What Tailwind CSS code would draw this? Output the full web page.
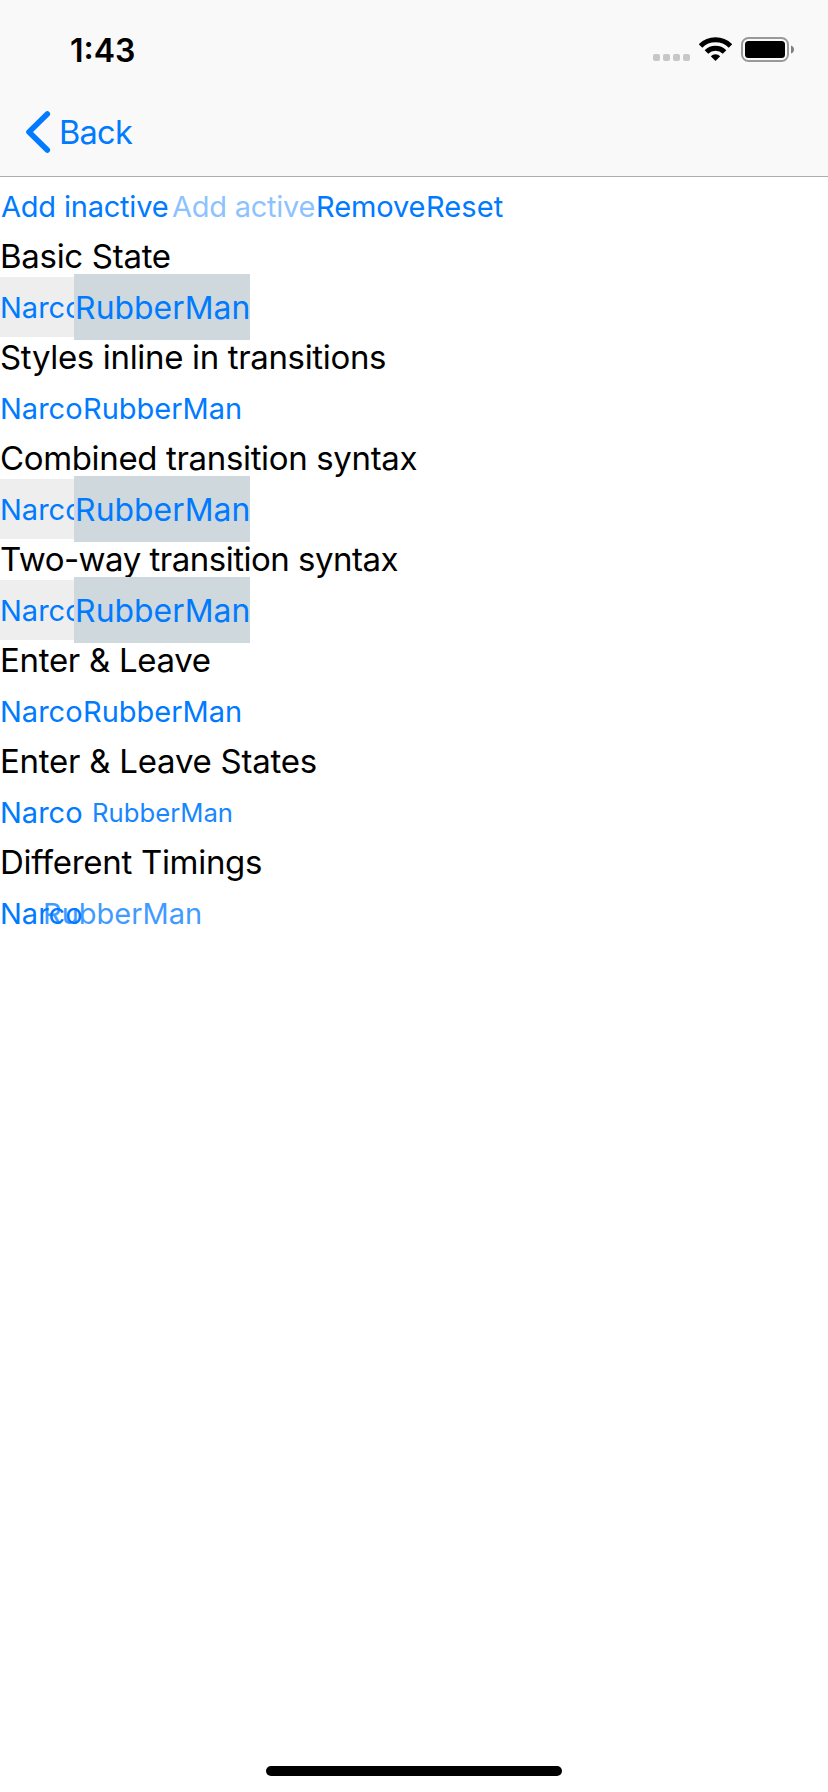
<!DOCTYPE html>
<html lang="en">
<head>
<meta charset="utf-8">
<title>Animations</title>
<script src="https://cdn.jsdelivr.net/npm/@tailwindcss/browser@4"></script>
</head>
<body class="bg-white">
<div class="flex h-[1792px] w-[828px] flex-col overflow-hidden bg-white font-[Inter,sans-serif] whitespace-nowrap text-black">
  <header class="flex h-[177px] shrink-0 flex-col border-b border-[#adadad] bg-[#f9f9f9]">
    <!-- Status bar -->
    <div class="flex h-[88px] items-start justify-between pt-[37px] pr-[34px] pl-[70px]">
      <div class="text-[32px] leading-[27px] font-semibold">1:43</div>
      <div class="flex items-start">
        <div class="mt-[17px] mr-[9px] flex gap-[3px]">
          <i class="size-[7px] rounded-xs bg-[#c7c7c7]"></i>
          <i class="size-[7px] rounded-xs bg-[#c7c7c7]"></i>
          <i class="size-[7px] rounded-xs bg-[#c7c7c7]"></i>
          <i class="size-[7px] rounded-xs bg-[#c7c7c7]"></i>
        </div>
        <svg class="mr-[9px]" width="33" height="24" viewBox="0 0 33 24" fill="none" stroke="#000" stroke-width="5">
          <path d="M1.5 9A21.2 21.2 0 0 1 31.5 9"/>
          <path d="M7.45 14.95A12.8 12.8 0 0 1 25.55 14.95"/>
          <path d="M11.8 19.3A6.7 6.7 0 0 1 21.2 19.3L16.5 24Z" fill="#000" stroke="none"/>
        </svg>
        <svg width="53" height="25" viewBox="0 0 53 25">
          <rect x="1" y="1" width="46" height="23" rx="6.5" fill="none" stroke="#999" stroke-width="2"/>
          <rect x="4" y="4" width="40" height="17" rx="3.5"/>
          <path d="M50 8.5Q53 9.5 53 12.5T50 16.5Z" fill="#808080"/>
        </svg>
      </div>
    </div>
    <!-- Navigation bar -->
    <div class="flex h-[88px] items-center pl-[26px] text-[#007aff]">
      <svg width="25" height="44" viewBox="0 0 25 44" fill="none" stroke="currentColor" stroke-width="5.6" stroke-linecap="round" stroke-linejoin="round"><path d="M21.3 4L3 22L21.3 40"/></svg>
      <span class="ml-2 pt-[2px] text-[32.5px] tracking-[-0.7px]">Back</span>
    </div>
  </header>

  <main class="-mt-px flex flex-col text-[33px] text-black">
    <div class="flex h-[60px] text-[29px] leading-[62px] text-[#007aff]">
      <div class="w-[172px] pl-px tracking-[-0.2px]">Add inactive</div>
      <div class="w-[144px] tracking-[-0.25px] opacity-45">Add active</div>
      <div class="w-[110px] tracking-[-0.1px]">Remove</div>
      <div class="tracking-[0.1px]">Reset</div>
    </div>

    <div class="h-[41px] leading-[41px] tracking-[-0.3px]">Basic State</div>
    <div class="flex h-[60px] text-[29px] leading-[62px] text-[#007aff]">
      <div class="w-[82px] bg-[#eeeeee]">Narco</div>
      <div class="w-[160px] scale-110 bg-[#cfd8dc] pl-px">RubberMan</div>
    </div>

    <div class="h-[41px] leading-[41px] tracking-[-0.34px]">Styles inline in transitions</div>
    <div class="flex h-[60px] text-[29px] leading-[62px] text-[#007aff]">
      <div class="w-[82px]">Narco</div>
      <div class="w-[160px] pl-px">RubberMan</div>
    </div>

    <div class="h-[41px] leading-[41px] tracking-[-0.35px]">Combined transition syntax</div>
    <div class="flex h-[60px] text-[29px] leading-[62px] text-[#007aff]">
      <div class="w-[82px] bg-[#eeeeee]">Narco</div>
      <div class="w-[160px] scale-110 bg-[#cfd8dc] pl-px">RubberMan</div>
    </div>

    <div class="h-[41px] leading-[41px] tracking-[-0.5px]">Two-way transition syntax</div>
    <div class="flex h-[60px] text-[29px] leading-[62px] text-[#007aff]">
      <div class="w-[82px] bg-[#eeeeee]">Narco</div>
      <div class="w-[160px] scale-110 bg-[#cfd8dc] pl-px">RubberMan</div>
    </div>

    <div class="h-[41px] leading-[41px] tracking-[-0.3px]">Enter &amp; Leave</div>
    <div class="flex h-[60px] text-[29px] leading-[62px] text-[#007aff]">
      <div class="w-[82px]">Narco</div>
      <div class="w-[160px] pl-px">RubberMan</div>
    </div>

    <div class="h-[41px] leading-[41px] tracking-[-0.24px]">Enter &amp; Leave States</div>
    <div class="flex h-[60px] text-[29px] leading-[62px] text-[#007aff]">
      <div class="w-[82px]">Narco</div>
      <div class="w-[160px] scale-[0.885] pl-px opacity-90">RubberMan</div>
    </div>

    <div class="h-[41px] leading-[41px] tracking-[-0.3px]">Different Timings</div>
    <div class="flex h-[60px] text-[29px] leading-[62px] text-[#007aff]">
      <div class="w-[82px]">Narco</div>
      <div class="w-[160px] -translate-x-10 pl-px opacity-75">RubberMan</div>
    </div>
  </main>

  <!-- Home indicator -->
  <div class="mx-auto mt-auto mb-4 h-[10px] w-[296px] shrink-0 rounded-full bg-black"></div>
</div>
</body>
</html>
